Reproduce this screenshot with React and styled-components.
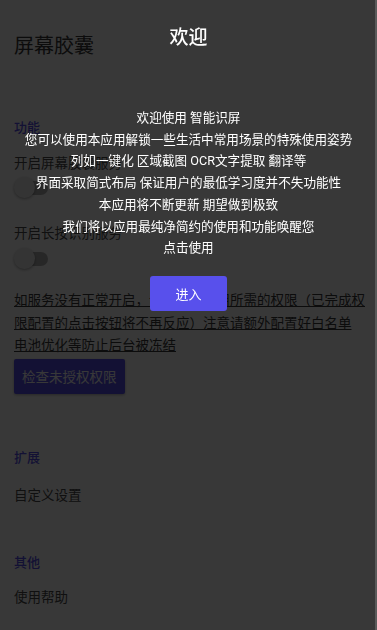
import React from "react";
import styled, { createGlobalStyle } from "styled-components";

const Global = createGlobalStyle`
  html, body { margin: 0; padding: 0; background: #ffffff; }
  body { font-family: "Roboto", "Noto Sans CJK SC", sans-serif; overflow: hidden; }
  * { box-sizing: border-box; }
`;

const Page = styled.div`
  display: flex;
  flex-direction: column;
  align-items: flex-start;
  padding: 32px 8px 0 14px;
  min-height: 630px;
  background: #ffffff;
  color: #4a4a4a;
`;

const Title = styled.h1`
  margin: 0;
  font-size: 20px;
  line-height: 28px;
  font-weight: 400;
  color: #3a3a3a;
`;

const SectionLabel = styled.div`
  margin-top: ${(p) => p.$gap}px;
  font-size: 13px;
  line-height: 20px;
  font-weight: 500;
  color: #5850ec;
`;

const ItemText = styled.div`
  margin-top: ${(p) => p.$gap}px;
  font-size: 13.5px;
  line-height: 22px;
  color: #4a4a4a;
`;

const Switch = styled.div`
  position: relative;
  margin-top: ${(p) => p.$gap}px;
  width: 34px;
  height: 22px;
  display: flex;
  align-items: center;
`;

const Track = styled.div`
  margin-left: 4px;
  width: 30px;
  height: 14px;
  border-radius: 7px;
  background: #b3b3b3;
`;

const Thumb = styled.div`
  position: absolute;
  left: 0;
  top: 0;
  width: 21px;
  height: 21px;
  border-radius: 50%;
  background: #eeeeee;
  box-shadow: 0 1px 3px rgba(0, 0, 0, 0.35);
`;

const Notice = styled.p`
  margin: 19px 0 0;
  font-size: 13.5px;
  line-height: 22.5px;
  color: #3a3a3a;
  text-decoration: underline;
  white-space: nowrap;
`;

const CheckButton = styled.button`
  margin-top: 2px;
  height: 35px;
  padding: 0 8px;
  border: none;
  border-radius: 2px;
  background: #5850ec;
  color: #ffffff;
  font-family: "Roboto", "Noto Sans CJK SC", sans-serif;
  font-size: 13.5px;
  box-shadow: 0 1px 3px rgba(0, 0, 0, 0.3);
`;

const Overlay = styled.div`
  position: fixed;
  inset: 0;
  background: rgba(0, 0, 0, 0.78);
  display: flex;
  flex-direction: column;
  align-items: center;
  padding-top: 25px;
  color: #ffffff;
`;

const WelcomeTitle = styled.h2`
  margin: 0;
  font-size: 19px;
  line-height: 26px;
  font-weight: 500;
`;

const Intro = styled.div`
  margin-top: 56px;
  display: flex;
  flex-direction: column;
  align-items: center;
  font-size: 12.6px;
  line-height: 21.7px;
`;

const EnterButton = styled.button`
  margin-top: 17px;
  width: 77px;
  height: 35px;
  border: none;
  border-radius: 3px;
  background: #5850ec;
  color: #ffffff;
  font-family: "Roboto", "Noto Sans CJK SC", sans-serif;
  font-size: 13px;
`;

const ScrollStrip = styled.div`
  position: fixed;
  top: 0;
  right: 0;
  width: 2px;
  height: 100%;
  background: #5a5a5a;
`;

const introLines = [
  "欢迎使用 智能识屏",
  "您可以使用本应用解锁一些生活中常用场景的特殊使用姿势",
  "列如一键化 区域截图 OCR文字提取 翻译等",
  "界面采取简式布局 保证用户的最低学习度并不失功能性",
  "本应用将不断更新 期望做到极致",
  "我们将以应用最纯净简约的使用和功能唤醒您",
  "点击使用",
];

function Toggle({ gap }) {
  return (
    <Switch $gap={gap}>
      <Track />
      <Thumb />
    </Switch>
  );
}

export default function App() {
  return (
    <>
      <Global />
      <Page>
        <Title>屏幕胶囊</Title>
        <SectionLabel $gap={58}>功能</SectionLabel>
        <ItemText $gap={14}>开启屏幕胶囊服务</ItemText>
        <Toggle gap={3} />
        <ItemText $gap={23}>开启长按识别服务</ItemText>
        <Toggle gap={4} />
        <Notice>
          如服务没有正常开启，请授予本应用所需的权限（已完成权
          <br />
          限配置的点击按钮将不再反应）注意请额外配置好白名单
          <br />
          电池优化等防止后台被冻结
        </Notice>
        <CheckButton>检查未授权权限</CheckButton>
        <SectionLabel $gap={54}>扩展</SectionLabel>
        <ItemText $gap={16}>自定义设置</ItemText>
        <SectionLabel $gap={47}>其他</SectionLabel>
        <ItemText $gap={13}>使用帮助</ItemText>
      </Page>
      <Overlay>
        <WelcomeTitle>欢迎</WelcomeTitle>
        <Intro>
          {introLines.map((l) => (
            <div key={l}>{l}</div>
          ))}
        </Intro>
        <EnterButton>进入</EnterButton>
      </Overlay>
      <ScrollStrip />
    </>
  );
}
